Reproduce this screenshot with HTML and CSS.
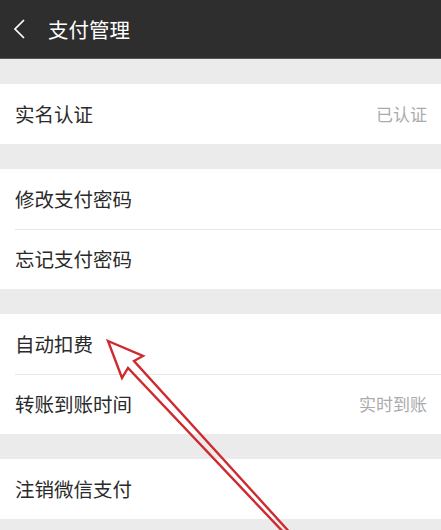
FILE: index.html
```html
<!DOCTYPE html>
<html lang="zh">
<head>
<meta charset="utf-8">
<title>支付管理</title>
<link rel="stylesheet" href="styles.css">
</head>
<body>
<div class="page">
  <header class="topbar">
    <svg class="back" width="16" height="22" viewBox="0 0 16 22"><path d="M13 2 L4 11 L13 20" fill="none" stroke="#fff" stroke-width="1.7"/></svg>
    <span class="title">支付管理</span>
  </header>
  <div class="gap"></div>
  <section class="group">
    <div class="row"><span class="label">实名认证</span><span class="value">已认证</span></div>
  </section>
  <div class="gap"></div>
  <section class="group">
    <div class="row"><span class="label">修改支付密码</span></div>
    <div class="row"><span class="label">忘记支付密码</span></div>
  </section>
  <div class="gap"></div>
  <section class="group">
    <div class="row"><span class="label">自动扣费</span></div>
    <div class="row"><span class="label">转账到账时间</span><span class="value">实时到账</span></div>
  </section>
  <div class="gap"></div>
  <section class="group">
    <div class="row"><span class="label">注销微信支付</span></div>
  </section>
  <div class="gap"></div>
  <svg class="arrow" width="441" height="530" viewBox="0 0 441 530">
    <polygon points="108,341 143,356 134,361 293,536 287,536 128,368 122,378" fill="none" stroke="#cf2a2f" stroke-width="2.4" stroke-linejoin="miter"/>
  </svg>
</div>
</body>
</html>
```
FILE: styles.css
```css
html, body {
  margin: 0;
  padding: 0;
  background: #ebebeb;
}
body {
  font-family: "Noto Sans CJK SC", "Noto Sans", sans-serif;
  overflow: hidden;
}
.page {
  position: relative;
  width: 441px;
  height: 530px;
  overflow: hidden;
}
.topbar {
  height: 59px;
  background: #2e2e2e;
  display: flex;
  align-items: center;
  padding-left: 11px;
  gap: 21px;
  border-bottom: 1px solid #555;
  box-sizing: border-box;
}
.back {
  display: block;
}
.title {
  color: #fff;
  font-size: 20.5px;
  line-height: 1;
}
.gap {
  height: 25px;
}
.group {
  background: #fff;
}
.row {
  height: 60px;
  margin-left: 15px;
  padding-right: 14px;
  padding-bottom: 2px;
  display: flex;
  align-items: center;
  justify-content: space-between;
  box-sizing: border-box;
}
.row + .row {
  border-top: 1px solid #e6e6e6;
}
.label {
  font-size: 19.5px;
  color: #2a2a2a;
}
.value {
  font-size: 17px;
  color: #ababab;
}
.arrow {
  position: absolute;
  left: 0;
  top: 0;
  pointer-events: none;
}
```
